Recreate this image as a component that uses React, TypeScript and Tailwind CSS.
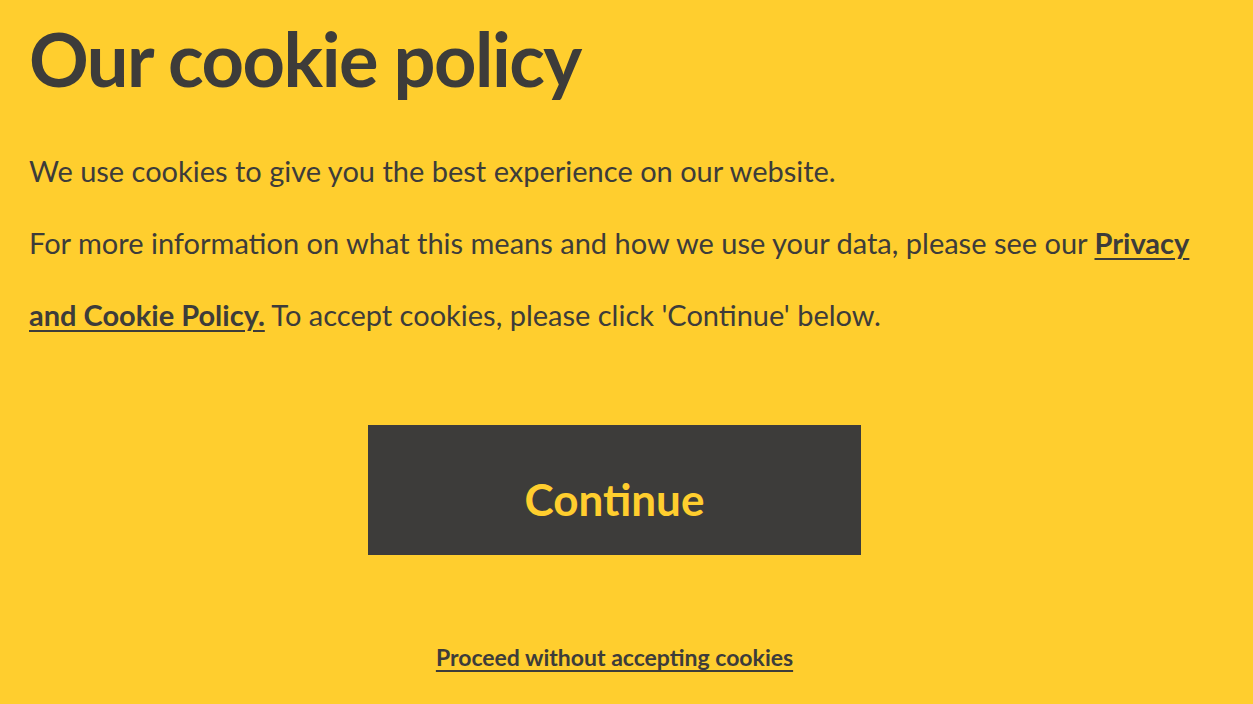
export default function App() {
  return (
    <div
      className="min-h-screen bg-[#ffce2e] text-[#3d3c3a] pl-[29px] pr-[53px]"
      style={{ fontFamily: "Lato, 'Open Sans', sans-serif" }}
    >
      <h1 className="pt-[14px] text-[74px] font-bold leading-[90px] tracking-[-1.5px]">
        Our cookie policy
      </h1>
      <div className="mt-[31px] text-[29px] leading-[72px]">
        <p>We use cookies to give you the best experience on our website.</p>
        <p>
          For more information on what this means and how we use your data,
          please see our{" "}
          <a href="#" className="font-bold underline decoration-2 underline-offset-4">
            Privacy and Cookie Policy.
          </a>{" "}
          To accept cookies, please click 'Continue' below.
        </p>
      </div>
      <div className="mt-[74px] flex justify-center">
        <button className="w-[493px] h-[130px] pt-[18px] bg-[#3d3c3a] text-[#ffce2e] text-[44px] font-bold">
          Continue
        </button>
      </div>
      <div className="mt-[85px] flex justify-center">
        <a href="#" className="text-[23px] font-bold underline decoration-2 underline-offset-4">
          Proceed without accepting cookies
        </a>
      </div>
    </div>
  );
}
